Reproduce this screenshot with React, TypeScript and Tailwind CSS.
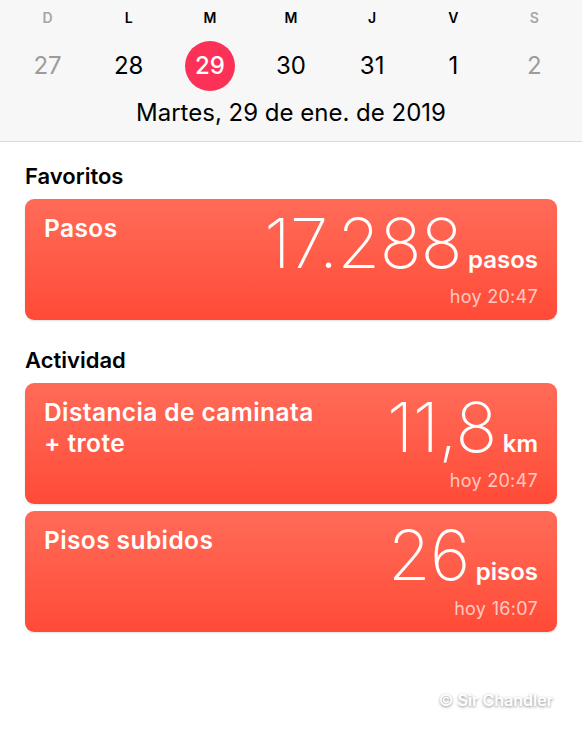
import React from "react";

const days = [
  { letter: "D", num: "27", muted: true },
  { letter: "L", num: "28" },
  { letter: "M", num: "29", today: true },
  { letter: "M", num: "30" },
  { letter: "J", num: "31" },
  { letter: "V", num: "1" },
  { letter: "S", num: "2", muted: true },
];

type Metric = {
  label: string[];
  value: string;
  unit: string;
  time: string;
};

const MetricCard: React.FC<{ m: Metric }> = ({ m }) => {
  return (
    <div className="rounded-[9px] bg-gradient-to-b from-[#ff6b58] to-[#ff4a36] px-[19px] pt-[10px] pb-[12px] text-white shadow-[0_1px_2px_rgba(0,0,0,0.12)] flex justify-between items-start">
      <div className="pt-[4px] text-[24.5px] leading-[31px] font-semibold tracking-[0.4px]">
        {m.label.map((l) => (
          <div key={l}>{l}</div>
        ))}
      </div>
      <div className="flex flex-col items-end">
        <div className="flex items-baseline">
          <span className="text-[69px] leading-none font-extralight tracking-[-0.5px]">
            {m.value}
          </span>
          <span className="ml-[6px] text-[24px] font-semibold">{m.unit}</span>
        </div>
        <div className="mt-[8px] text-[18px] leading-[22px] text-white/70 tracking-[0.3px]">
          {m.time}
        </div>
      </div>
    </div>
  );
};

const App: React.FC = () => {
  return (
    <div className="w-[582px] h-[730px] bg-white font-['Inter',sans-serif] text-black relative overflow-hidden">
      {/* Week strip */}
      <div className="bg-[#f7f7f7] border-b border-[#d9d9d9] pt-[9px] pb-[14px]">
        <div className="grid grid-cols-7 px-[7px]">
          {days.map((d, i) => (
            <div
              key={i}
              className={`text-center text-[14px] leading-[18px] font-semibold ${
                d.muted ? "text-[#a5a5a5]" : "text-black"
              }`}
            >
              {d.letter}
            </div>
          ))}
        </div>
        <div className="grid grid-cols-7 px-[7px] mt-[14px]">
          {days.map((d, i) => (
            <div key={i} className="flex justify-center">
              <div
                className={`w-[50px] h-[50px] rounded-full flex items-center justify-center text-[24px] ${
                  d.today
                    ? "bg-[#fc3158] text-white font-medium"
                    : d.muted
                    ? "text-[#9c9c9c]"
                    : "text-black"
                }`}
              >
                {d.num}
              </div>
            </div>
          ))}
        </div>
        <div className="mt-[8px] text-center text-[24px] leading-[28px]">
          Martes, 29 de ene. de 2019
        </div>
      </div>

      <div className="px-[25px]">
        <h2 className="mt-[22px] text-[22px] leading-[24px] font-semibold">
          Favoritos
        </h2>
        <div className="mt-[11px]">
          <MetricCard
            m={{ label: ["Pasos"], value: "17.288", unit: "pasos", time: "hoy 20:47" }}
          />
        </div>

        <h2 className="mt-[28px] text-[22px] leading-[24px] font-semibold">
          Actividad
        </h2>
        <div className="mt-[11px] flex flex-col gap-[7px]">
          <MetricCard
            m={{
              label: ["Distancia de caminata", "+ trote"],
              value: "11,8",
              unit: "km",
              time: "hoy 20:47",
            }}
          />
          <MetricCard
            m={{ label: ["Pisos subidos"], value: "26", unit: "pisos", time: "hoy 16:07" }}
          />
        </div>
      </div>

      {/* watermark */}
      <div className="absolute right-[29px] top-[688px] text-[16px] font-semibold text-white [text-shadow:0_1px_3px_rgba(0,0,0,0.45)]">
        © Sir Chandler
      </div>
    </div>
  );
};

export default App;
